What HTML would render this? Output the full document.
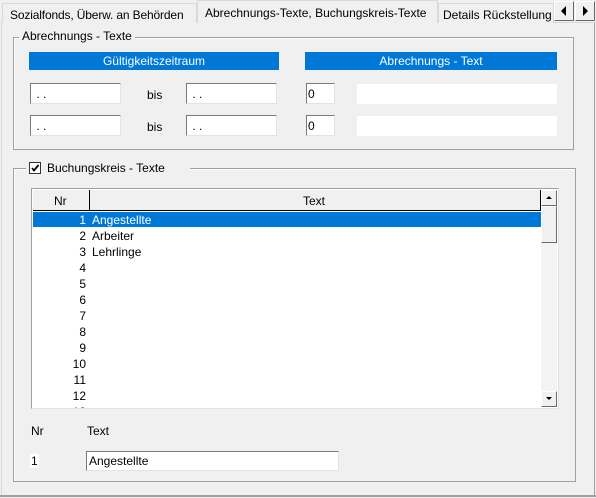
<!DOCTYPE html>
<html><head><style>
*{margin:0;padding:0;box-sizing:border-box}
body{width:596px;height:498px;background:#f0f0f0;font-family:"Liberation Sans",Arial,sans-serif;font-size:12px;color:#000;position:relative;overflow:hidden}
.a{position:absolute}
.tab{position:absolute;border:1px solid #d9d9d9;border-bottom:none;background:#f0f0f0;padding:4px 0 0 8px;white-space:nowrap;overflow:hidden}
.inp{position:absolute;background:#fff;border-top:1px solid #7a7a7a;border-left:1px solid #7a7a7a;border-right:1px solid #e3e3e3;border-bottom:1px solid #e3e3e3;font-size:12px;padding:3px 2px}
.blue{position:absolute;background:#0078d7;color:#fff;text-align:center;line-height:18px;height:18px}
.grp{position:absolute;border:1px solid #a0a0a0;box-shadow:1px 1px 0 #fff inset}
.lbl{position:absolute;background:#f0f0f0;padding:0 3px}
.row{position:absolute;left:33px;width:508px;height:16px;line-height:16px}
.row .n{position:absolute;left:0;width:53px;text-align:right}
.row .t{position:absolute;left:59px}
.btn{position:absolute;background:#f0f0f0;border:1px solid #fff;border-right-color:#696969;border-bottom-color:#696969}
</style></head><body>
<div class="a" style="left:1px;top:22px;width:594px;height:474px;border:1px solid #d9d9d9;border-right-color:#a0a0a0;border-bottom-color:#a0a0a0"></div>
<div class="a" style="left:0;top:495px;width:596px;height:2px;background:#a0a0a0"></div>
<div class="tab" style="left:2px;top:3px;width:195px;height:20px;padding-left:7px;letter-spacing:-0.15px">Sozialfonds, Überw. an Behörden</div>
<div class="tab" style="left:438px;top:3px;width:116px;height:20px;padding-left:4px">Details Rückstellung</div>
<div class="tab" style="left:197px;top:0;width:241px;height:23px;padding-left:7px;padding-top:5px;border-color:#d9d9d9;background:#f0f0f0">Abrechnungs-Texte, Buchungskreis-Texte</div>
<div class="btn" style="left:554px;top:1px;width:20px;height:20px"></div>
<div class="btn" style="left:575px;top:1px;width:20px;height:20px"></div>
<svg class="a" style="left:554px;top:1px" width="42" height="20"><path d="M7 10 L12 5 L12 15Z M29 5 L34 10 L29 15Z" fill="#000"/></svg>

<div class="grp" style="left:13px;top:37px;width:561px;height:113px"></div>
<div class="lbl" style="left:19px;top:29px">Abrechnungs - Texte</div>
<div class="blue" style="left:29px;top:52px;width:250px">Gültigkeitszeitraum</div>
<div class="blue" style="left:305px;top:52px;width:252px">Abrechnungs - Text</div>
<div class="inp" style="left:30px;top:83px;width:91px;height:21px">&nbsp;. .</div>
<div class="a" style="left:147px;top:88px">bis</div>
<div class="inp" style="left:186px;top:83px;width:91px;height:21px">&nbsp;. .</div>
<div class="inp" style="left:306px;top:83px;width:29px;height:21px;padding-left:1px">0</div>
<div class="a" style="left:357px;top:84px;width:200px;height:20px;background:#fff"></div>
<div class="inp" style="left:30px;top:115px;width:91px;height:21px">&nbsp;. .</div>
<div class="a" style="left:147px;top:120px">bis</div>
<div class="inp" style="left:186px;top:115px;width:91px;height:21px">&nbsp;. .</div>
<div class="inp" style="left:306px;top:115px;width:29px;height:21px;padding-left:1px">0</div>
<div class="a" style="left:357px;top:116px;width:200px;height:20px;background:#fff"></div>

<div class="grp" style="left:13px;top:168px;width:563px;height:314px"></div>
<div class="lbl" style="left:26px;top:161px;width:164px;height:15px"></div>
<div class="a" style="left:29px;top:162px;width:12px;height:12px;background:#fff;border:1px solid #333"></div>
<svg class="a" style="left:29px;top:162px" width="12" height="12"><path d="M3 6 L5 8.5 L9.5 3" stroke="#000" stroke-width="1.8" fill="none"/></svg>
<div class="a" style="left:47px;top:161px">Buchungskreis - Texte</div>

<div class="a" style="left:31px;top:188px;width:528px;height:221px;background:#fff;border-top:1px solid #a0a0a0;border-left:1px solid #a0a0a0;border-right:1px solid #e3e3e3;border-bottom:1px solid #e3e3e3"></div>
<div class="a" style="left:33px;top:190px;width:508px;height:21px;background:#f0f0f0;border-bottom:1px solid #000;border-right:1px solid #000"></div>
<div class="a" style="left:89px;top:190px;width:1px;height:20px;background:#000"></div>
<div class="a" style="left:54px;top:194px">Nr</div>
<div class="a" style="left:303px;top:194px">Text</div>
<div class="a" style="left:33px;top:212px;width:508px;height:15px;background:#0078d7"></div>
<div class="row" style="top:212px;color:#fff"><span class="n">1</span><span class="t">Angestellte</span></div>
<div class="row" style="top:228px"><span class="n">2</span><span class="t">Arbeiter</span></div>
<div class="row" style="top:244px"><span class="n">3</span><span class="t">Lehrlinge</span></div>
<div class="row" style="top:260px"><span class="n">4</span></div>
<div class="row" style="top:276px"><span class="n">5</span></div>
<div class="row" style="top:292px"><span class="n">6</span></div>
<div class="row" style="top:308px"><span class="n">7</span></div>
<div class="row" style="top:324px"><span class="n">8</span></div>
<div class="row" style="top:340px"><span class="n">9</span></div>
<div class="row" style="top:356px"><span class="n">10</span></div>
<div class="row" style="top:372px"><span class="n">11</span></div>
<div class="row" style="top:388px"><span class="n">12</span></div>
<div class="a" style="left:33px;top:404px;width:508px;height:4px;overflow:hidden"><div class="row" style="left:0;top:0"><span class="n">13</span></div></div>
<div class="a" style="left:541px;top:190px;width:16px;height:217px;background:#f4f4f4"></div>
<div class="btn" style="left:541px;top:190px;width:16px;height:16px"></div>
<div class="btn" style="left:541px;top:206px;width:16px;height:37px"></div>
<div class="btn" style="left:541px;top:391px;width:16px;height:16px"></div>
<svg class="a" style="left:541px;top:190px" width="16" height="217"><path d="M5 9 L8 6 L11 9Z M5 207 L8 210 L11 207Z" fill="#000"/></svg>

<div class="a" style="left:31px;top:424px">Nr</div>
<div class="a" style="left:87px;top:424px">Text</div>
<div class="a" style="left:30px;top:454px;background:#fff;padding:0 1px">1</div>
<div class="inp" style="left:86px;top:451px;width:253px;height:20px;padding:2px 2px">Angestellte</div>
</body></html>
